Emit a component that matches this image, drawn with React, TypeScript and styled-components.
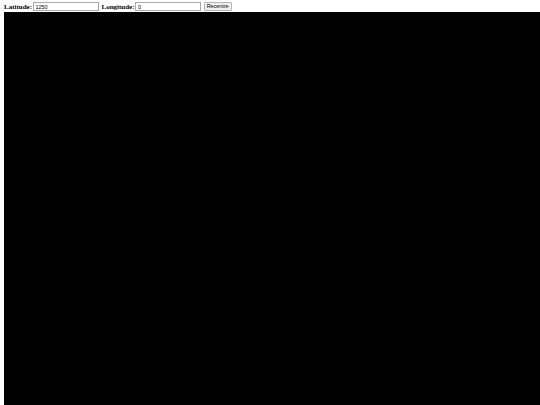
import styled, { createGlobalStyle } from 'styled-components';

const GlobalStyle = createGlobalStyle`
    html, body {
        margin: 0;
        padding: 0;
        background: #ffffff;
    }
`;

const Page = styled.div`
    display: flex;
    flex-direction: column;
    height: 405px;
    padding-left: 4px;
    overflow: hidden;
`;

const Controls = styled.div`
    display: flex;
    align-items: center;
    height: 12px;
    padding-top: 1px;
    box-sizing: border-box;
`;

const Label = styled.label`
    font-family: "Liberation Serif", serif;
    font-weight: bold;
    font-size: 7px;
    color: #000000;
    margin-right: 0.5px;
`;

const Field = styled.input`
    width: 66px;
    height: 9px;
    box-sizing: border-box;
    margin: 0 3px 0 0;
    padding: 0 2px;
    border: 1px solid #a9a9a9;
    font-family: "Liberation Sans", sans-serif;
    font-size: 5.4px;
    color: #000000;
    background: #ffffff;
    outline: none;
`;

const Button = styled.button`
    width: 28px;
    height: 9px;
    box-sizing: border-box;
    margin: 0 0 0 -0.5px;
    padding: 0;
    border: 1px solid #b5b5b5;
    border-radius: 1px;
    background: #efefef;
    font-family: "Liberation Sans", sans-serif;
    font-size: 5.4px;
    color: #000000;
    line-height: 7px;
`;

const Map = styled.canvas`
    display: block;
    flex: 1;
    width: 100%;
    background: #000000;
`;

function App() {
    return (
        <Page>
            <GlobalStyle />
            <Controls>
                <Label>Latitude:</Label>
                <Field defaultValue="1250" />
                <Label>Longitude:</Label>
                <Field defaultValue="0" />
                <Button>Recentre</Button>
            </Controls>
            <Map />
        </Page>
    );
}

export default App;
